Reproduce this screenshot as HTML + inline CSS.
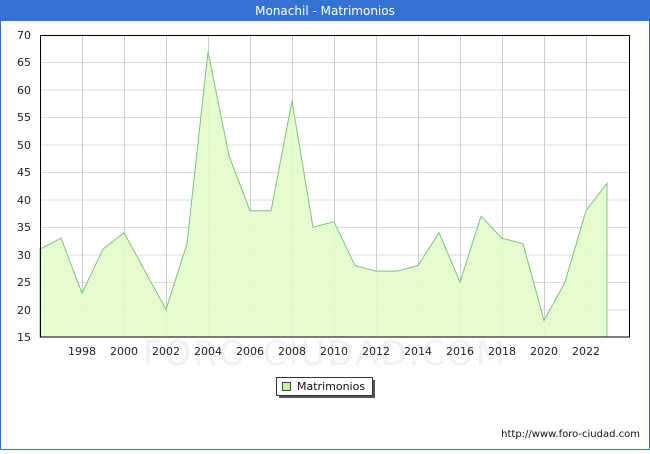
<!DOCTYPE html>
<html><head><style>
body{margin:0;width:650px;height:450px;overflow:hidden;background:#fff;font-family:"DejaVu Sans","Liberation Sans",sans-serif}
</style></head><body>
<svg width="650" height="450" xmlns="http://www.w3.org/2000/svg" font-family="DejaVu Sans, Liberation Sans, sans-serif">
<rect x="0.5" y="0.5" width="649" height="449" fill="#fff" stroke="#3473d4"/>
<rect x="0" y="0" width="650" height="21" fill="#3473d4"/>
<text x="325" y="15" fill="#fff" font-size="12" text-anchor="middle">Monachil - Matrimonios</text>
<text x="325" y="365" fill="#eef1f8" font-size="34" text-anchor="middle" letter-spacing="2">FORO-CIUDAD.COM</text>
<g stroke="#ddd" stroke-width="1">
<line x1="40" y1="62.5" x2="630" y2="62.5"/><line x1="40" y1="90" x2="630" y2="90"/><line x1="40" y1="117.5" x2="630" y2="117.5"/><line x1="40" y1="145" x2="630" y2="145"/><line x1="40" y1="172.5" x2="630" y2="172.5"/><line x1="40" y1="200" x2="630" y2="200"/><line x1="40" y1="227.5" x2="630" y2="227.5"/><line x1="40" y1="255" x2="630" y2="255"/><line x1="40" y1="282.5" x2="630" y2="282.5"/><line x1="40" y1="310" x2="630" y2="310"/>
</g>
<g stroke="#ccc" stroke-width="1">
<line x1="82.5" y1="35" x2="82.5" y2="337"/><line x1="124.5" y1="35" x2="124.5" y2="337"/><line x1="166.5" y1="35" x2="166.5" y2="337"/><line x1="208.5" y1="35" x2="208.5" y2="337"/><line x1="250.5" y1="35" x2="250.5" y2="337"/><line x1="292.5" y1="35" x2="292.5" y2="337"/><line x1="334.5" y1="35" x2="334.5" y2="337"/><line x1="376.5" y1="35" x2="376.5" y2="337"/><line x1="418.5" y1="35" x2="418.5" y2="337"/><line x1="460.5" y1="35" x2="460.5" y2="337"/><line x1="502.5" y1="35" x2="502.5" y2="337"/><line x1="544.5" y1="35" x2="544.5" y2="337"/><line x1="586.5" y1="35" x2="586.5" y2="337"/>
</g>
<polygon fill="#e2fccb" fill-opacity="0.9" stroke="#7cc47c" stroke-width="1" points="40,337 40,249.1 61,238.2 82,293.1 103,249.1 124,232.7 145,271.1 166,309.5 187,243.7 208,51.5 229,155.8 250,210.7 271,210.7 292,100.9 313,227.2 334,221.7 355,265.6 376,271.1 397,271.1 418,265.6 439,232.7 460,282.1 481,216.2 502,238.2 523,243.7 544,320.5 565,282.1 586,210.7 607,183.3 607,337"/>
<rect x="40.5" y="35.5" width="589" height="301.5" fill="none" stroke="#000"/>
<g font-size="11" fill="#222" text-anchor="end">
<text x="31" y="39">70</text><text x="31" y="66">65</text><text x="31" y="94">60</text><text x="31" y="121">55</text><text x="31" y="149">50</text><text x="31" y="176">45</text><text x="31" y="204">40</text><text x="31" y="231">35</text><text x="31" y="259">30</text><text x="31" y="286">25</text><text x="31" y="314">20</text><text x="31" y="341">15</text>
</g>
<g font-size="11" fill="#222" text-anchor="middle">
<text x="82" y="355">1998</text><text x="124" y="355">2000</text><text x="166" y="355">2002</text><text x="208" y="355">2004</text><text x="250" y="355">2006</text><text x="292" y="355">2008</text><text x="334" y="355">2010</text><text x="376" y="355">2012</text><text x="418" y="355">2014</text><text x="460" y="355">2016</text><text x="502" y="355">2018</text><text x="544" y="355">2020</text><text x="586" y="355">2022</text>
</g>
<rect x="279" y="380" width="96" height="18" fill="#555"/>
<rect x="276.5" y="377.5" width="96" height="18" fill="#fff" stroke="#333"/>
<rect x="282.5" y="382.5" width="8" height="8" fill="#c4f49c" stroke="#444"/>
<text x="297" y="390" font-size="11" fill="#111">Matrimonios</text>
<text x="640" y="437" font-size="10" fill="#111" text-anchor="end">http://www.foro-ciudad.com</text>
</svg>
</body></html>
